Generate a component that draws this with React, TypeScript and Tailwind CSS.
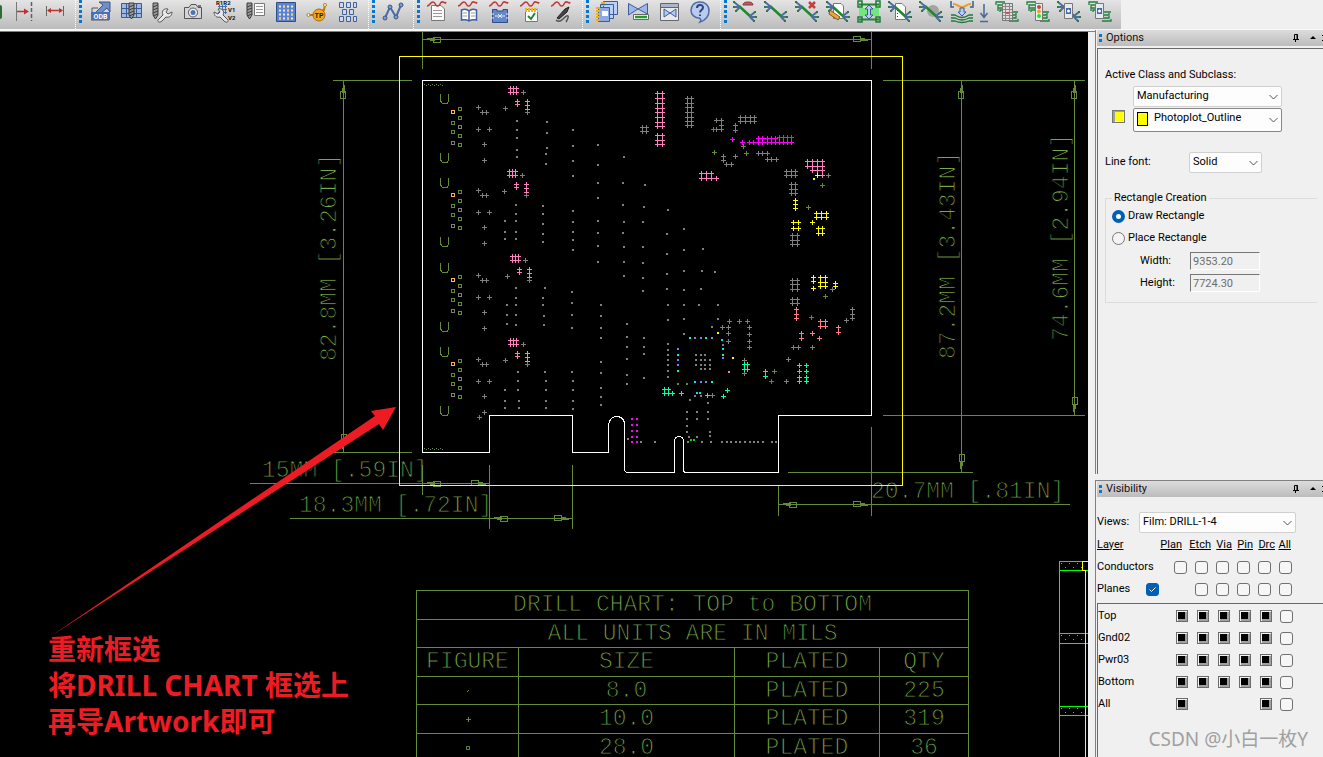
import type { ReactNode } from "react"
import clsx from "clsx"

const OLIVE = "#648c37"
const GRAY = "#808080"
const PINK = "#ff7fbf"
const TEAL = "#00ffaf"
const SALMON = "#ff7f7f"
const PURPLE = "#7f7fff"
const CYAN = "#00dfff"

type Pt = [number, number]

const grid = (xs: number[], ys: number[]): Pt[] => ys.flatMap((y) => xs.map((x): Pt => [x, y]))

const plusPath = (pts: Pt[]) => pts.map(([x, y]) => `M${x - 2} ${y + 0.5}h5M${x + 0.5} ${y - 2}v5`).join("")
const dotPath = (pts: Pt[]) => pts.map(([x, y]) => `M${x - 1} ${y - 1}h2v2h-2z`).join("")
const squarePath = (pts: Pt[]) => pts.map(([x, y]) => `M${x - 1.5} ${y - 1.5}h3v3h-3z`).join("")

/* ---------- drill data ---------- */

// the four connector clusters share one footprint
const clusters = [
  { x: 0, y: 0 },
  { x: -1, y: 83 },
  { x: 2, y: 168 },
  { x: 0, y: 252 },
]

const clusterPink: Pt[] = [...grid([510, 513, 516], [88, 92]), ...grid([517], [101, 104]), ...grid([527], [101, 105, 109])]
const clusterGray: Pt[] = [[523, 92], [505, 108], [527, 112]]
const clusterLeft: Pt[] = [[478, 107], [482, 112], [486, 112], [478, 129], [489, 129], [484, 144], [484, 160]]
const squaresGreen: Pt[] = [[460, 109], [460, 118], [453, 123], [453, 132], [460, 136], [460, 145]]
const squaresGray: Pt[] = [[460, 127], [453, 143]]

const slots = [94, 153, 178, 237, 263, 322, 347, 406]

const pluses: { color: string; pts: Pt[] }[] = [
  {
    color: PINK,
    pts: [
      ...grid([657, 662], [93, 98, 103, 108, 112, 117, 122, 126, 135, 140, 144]),
      ...grid([701, 706, 711], [173, 178]),
      [716, 178],
      ...grid([807, 812, 817, 822], [161, 166]),
      ...grid([812, 817, 822], [170]),
      [822, 175],
    ],
  },
  {
    color: GRAY,
    pts: [
      [479, 417],
      ...grid([642, 646], [127, 131]),
      ...grid([687, 691], [98, 103, 107, 112, 117, 121, 125]),
      [716, 120], [721, 120], [721, 125], [716, 129], [721, 129], [735, 125], [735, 130],
      ...grid([740, 745, 750, 754], [117, 121]),
      [723, 156], [723, 160], [726, 164], [731, 164], [735, 156],
      [758, 153], [762, 153], [767, 153], [767, 159], [771, 159], [776, 159],
      ...grid([786, 791, 795], [171, 175]),
      ...grid([791, 795], [184, 189, 193]),
      ...grid([792, 797], [235, 240, 244, 280, 284, 289, 299, 303]),
      [828, 175], [832, 289],
      [729, 321], [739, 321], [747, 321], [722, 327], [728, 327], [728, 333], [728, 341],
      [749, 327], [749, 334], [749, 341], [749, 347], [744, 360], [744, 373], [712, 395],
      [786, 381], [788, 359], [793, 347], [798, 347], [812, 347],
      [852, 309], [852, 314], [852, 318], [846, 320],
    ],
  },
  {
    color: "#ff00ff",
    pts: [
      [732, 139], [742, 142], [749, 142], [753, 142],
      ...grid([758, 762, 767, 771, 775], [138, 142]),
      ...grid([779, 783, 787, 791], [137, 142]),
    ],
  },
  {
    color: "#ffff00",
    pts: [
      [817, 175], [795, 200], [795, 204], [795, 208],
      ...grid([793, 798], [222, 228]),
      ...grid([816, 821, 826], [213, 217]),
      [812, 222],
      ...grid([818, 822], [228, 233]),
      ...grid([813], [277, 281, 288]),
      ...grid([820, 825], [277, 282, 286]),
      [835, 283], [835, 286],
    ],
  },
  {
    color: OLIVE,
    pts: [[713, 129], [714, 152], [743, 146], [746, 153], [822, 185], [808, 207], [825, 296], [811, 317], [774, 371], [771, 381]],
  },
  {
    color: SALMON,
    pts: [
      ...grid([796], [309, 314, 318]),
      ...grid([820, 825], [321, 326]),
      [801, 333], [801, 338], [812, 333], [819, 338], [838, 327], [838, 332],
    ],
  },
  {
    color: TEAL,
    pts: [
      ...grid([664, 668], [389, 393]),
      [672, 393], [681, 393], [707, 395], [727, 390], [723, 396],
      ...grid([744, 747], [364, 369]),
      [765, 371], [765, 376],
      ...grid([799, 806], [365, 371, 377, 381]),
    ],
  },
]

const dots: { color: string; pts: Pt[] }[] = [
  {
    color: GRAY,
    pts: [
      ...grid([517], [121, 130, 138, 150, 157]),
      [547, 122], [547, 133], [547, 148], [546, 154], [546, 164],
      ...grid([573], [130, 146, 161, 176, 211, 222, 232, 240, 250]),
      ...grid([598], [145, 165, 183, 198, 221, 233, 246, 262]),
      [624, 157], [623, 183], [623, 205], [624, 222], [623, 233], [624, 247], [624, 262], [624, 276],
      [645, 185], [644, 207], [643, 222], [643, 247], [643, 263], [643, 278], [643, 291],
      ...grid([516], [205, 214, 221, 232, 239, 288, 298, 305, 315, 325]),
      ...grid([505], [221, 232, 239, 390, 401, 408]),
      ...grid([543], [206, 214, 224, 234, 242]),
      ...grid([507], [305, 315, 324]),
      [545, 288], [543, 298], [543, 305], [544, 316], [544, 325],
      ...grid([572], [292, 303, 315, 328, 372]),
      ...grid([601], [305, 316, 328, 338, 362, 373, 388, 397, 405]),
      ...grid([627], [324, 337, 347, 359, 375, 384]),
      ...grid([644], [338, 347, 354, 378]),
      ...grid([518], [372, 381, 390]),
      [519, 401], [519, 408], [545, 372],
      ...grid([546], [381, 390, 401, 408]),
      ...grid([573], [381, 390, 401, 409]),
      [628, 439], [641, 442], [655, 442],
      [668, 210], [684, 229], [667, 234], [684, 250], [667, 254], [703, 249],
      [667, 274], [684, 271], [702, 271], [715, 272], [667, 289], [684, 290], [701, 289],
      [668, 305], [684, 305], [699, 305], [718, 305], [668, 320], [684, 319], [718, 319], [712, 327], [684, 334],
      ...grid([668], [344, 350, 355, 360, 365, 371, 377]),
      [723, 345],
      ...grid([696, 701, 705], [355, 360, 365]),
      ...grid([710], [360, 365, 369]),
      [701, 369], [705, 369],
      [695, 396], [701, 396], [690, 400], [708, 403],
      ...grid([687, 697, 708], [412, 419]),
      [687, 426], [687, 432], [710, 432], [710, 436], [689, 437], [697, 437], [688, 442], [702, 442], [711, 442],
      ...grid([722, 727, 731, 736, 740, 745, 750, 754, 758, 763, 772, 776], [442]),
    ],
  },
  { color: "#ff00ff", pts: grid([632, 637], [419, 425, 431, 437, 442]) },
  { color: TEAL, pts: [[690, 338], [706, 338], [723, 355], [678, 355], [678, 371], [712, 382]] },
  { color: PURPLE, pts: [[695, 338], [701, 338], [712, 338], [723, 358], [678, 349], [678, 360], [678, 365], [701, 382], [706, 382]] },
  { color: CYAN, pts: [[722, 340], [723, 349], [695, 382], [697, 393], [700, 393]] },
  { color: "#ffff00", pts: [[814, 179], [718, 333], [733, 358]] },
  { color: SALMON, pts: [[729, 372]] },
  { color: OLIVE, pts: [[678, 384], [687, 384]] },
  { color: "#00df00", pts: [[691, 440], [694, 440]] },
]

/* ---------- board drawing ---------- */

// arrow head with its tip at x,y, body trailing in direction `turn`
function Tip({ x, y, turn }: { x: number; y: number; turn: number }) {
  return (
    <path
      d="M4 -1H12M7 1H12M11 -2H18V3H11Z"
      transform={`translate(${x + 0.5} ${y + 0.5}) rotate(${turn})`}
      fill="none"
      stroke={OLIVE}
    />
  )
}

const dimensions = [
  { text: "15MM [.59IN]", at: "translate(262 477)" },
  { text: "18.3MM [.72IN]", at: "translate(299 512)" },
  { text: "20.7MM [.81IN]", at: "translate(871 498)" },
  { text: "82.8MM [3.26IN]", at: "translate(336 361) rotate(-90)" },
  { text: "87.2MM [3.43IN]", at: "translate(955 359) rotate(-90)" },
  { text: "74.6MM [2.94IN]", at: "translate(1068 341) rotate(-90)" },
]

function Board() {
  return (
    <svg className="block" width="1088" height="725" viewBox="0 32 1088 725" role="img" aria-label="Board drawing">
      <g fill="#79a944" stroke="#000" fontSize="23" className="font-['Liberation_Mono',monospace]">
        {dimensions.map((d) => (
          <text key={d.text} transform={d.at} xmlSpace="preserve">
            {d.text}
          </text>
        ))}
      </g>

      <g shapeRendering="crispEdges" fill="none">
        <path
          stroke={OLIVE}
          d="M422.5 32V69M871.5 32V69M422 39.5H872
             M333 80.5H412M333 452.5H412M343.5 80V452
             M883 80.5H1085M883 415.5H1085M788 472.5H973M961.5 80V472M1074.5 80V415
             M250 483.5H490M422.5 465V495M489.5 465V529M290 518.5H572M572.5 465V529
             M778 504.5H1070M778.5 485V516M871.5 427V516"
        />
        <Tip x={422} y={39} turn={0} />
        <Tip x={871} y={39} turn={180} />
        <Tip x={343} y={80} turn={90} />
        <Tip x={343} y={452} turn={-90} />
        <Tip x={961} y={80} turn={90} />
        <Tip x={961} y={472} turn={-90} />
        <Tip x={1074} y={80} turn={90} />
        <Tip x={1074} y={415} turn={-90} />
        <Tip x={422} y={483} turn={0} />
        <Tip x={489} y={483} turn={180} />
        <Tip x={489} y={518} turn={0} />
        <Tip x={572} y={518} turn={180} />
        <Tip x={778} y={504} turn={0} />
        <Tip x={871} y={504} turn={180} />

        {slots.map((y) => (
          <path key={y} stroke={OLIVE} d={`M440.5 ${y}v7l2 2.5h5l1 -2.5v-7`} />
        ))}
        <path stroke={OLIVE} strokeDasharray="1 3" d="M424 84.5h19M426 85.5h17M424 448.5h19M426 449.5h17" />
        {clusters.map((c) => (
          <g key={c.y}>
            <g transform={`translate(0 ${c.y})`}>
              <path stroke={OLIVE} d={squarePath(squaresGreen)} />
              <path stroke={GRAY} d={squarePath(squaresGray)} />
              <path stroke="#ffaf5f" d={squarePath([[453, 112]])} />
              <path stroke={GRAY} d={plusPath(clusterLeft)} />
            </g>
            <g transform={`translate(${c.x} ${c.y})`}>
              <path stroke={PINK} d={plusPath(clusterPink)} />
              <path stroke={GRAY} d={plusPath(clusterGray)} />
            </g>
          </g>
        ))}
        {pluses.map((p) => (
          <path key={p.color} stroke={p.color} d={plusPath(p.pts)} />
        ))}
        {dots.map((p) => (
          <path key={p.color} fill={p.color} d={dotPath(p.pts)} />
        ))}

        <path
          stroke="#ffffff"
          d="M422.5 80.5H871.5V415.5H778.5V472.5H684.5L683.5 470.5V441.5Q683.5 436.5 679 436.5T674.5 441.5V472.5H626.5L624.5 470.5V422.5Q622.5 416.5 616.5 416.5T608.5 424.5V452.5H572.5V415.5H489.5V452.5H422.5Z"
        />
        <path stroke="#00ff00" d="M1088 561.5H1059.5V757M1059 570.5H1088M1059 633.5H1088M1059 643.5H1088M1059 706.5H1088M1059 715.5H1088" />
        <path
          fill="#00ff00"
          d={[563, 635, 708].map((y) => [1061, 1069, 1077].map((x) => `M${x} ${y}h1v1h-1zM${x + 4} ${y + 4}h1v1h-1z`).join("")).join("")}
        />
        <path stroke="#ffff00" d="M399.5 56.5H902.5V485.5H399.5ZM1088 561.5H1082.5V570.5H1085.5V757" />
      </g>

      <path fill="#ed1c24" d="M48 638L375 416L371 411L396 407L383 430L379 424Z" />
    </svg>
  )
}

const drills = [
  { figure: "dot", size: "8.0", qty: "225" },
  { figure: "plus", size: "10.0", qty: "319" },
  { figure: "square", size: "28.0", qty: "36" },
]

function DrillChart() {
  const cell = "border border-[#648c37] p-0 font-normal"
  return (
    <table className="absolute left-[416px] top-[558px] w-[552px] table-fixed border-collapse text-center font-['Liberation_Mono',monospace] text-[23px] leading-[26px] text-[#79a944] [-webkit-text-stroke:1px_black]">
      <colgroup>
        <col className="w-[102px]" />
        <col className="w-[216px]" />
        <col className="w-[145px]" />
        <col className="w-[89px]" />
      </colgroup>
      <thead>
        <tr className="h-[29px]">
          <th colSpan={4} className={cell}>DRILL CHART: TOP to BOTTOM</th>
        </tr>
        <tr className="h-[28px]">
          <th colSpan={4} className={cell}>ALL UNITS ARE IN MILS</th>
        </tr>
        <tr className="h-[29px]">
          <th className={cell}>FIGURE</th>
          <th className={cell}>SIZE</th>
          <th className={cell}>PLATED</th>
          <th className={cell}>QTY</th>
        </tr>
      </thead>
      <tbody>
        {drills.map((d) => (
          <tr key={d.size} className="h-[28px] even:h-[29px]">
            <td className={cell}>
              <svg className="mx-auto block" width="8" height="8" viewBox="0 0 8 8" fill="none" stroke={OLIVE} role="img" aria-label={d.figure}>
                {d.figure === "dot" && <path d="M3 5L5 3" />}
                {d.figure === "plus" && <path d="M2 4.5h5M4.5 2v5" />}
                {d.figure === "square" && <path d="M2.5 2.5h3v3h-3z" />}
              </svg>
            </td>
            <td className={cell}>{d.size}</td>
            <td className={cell}>PLATED</td>
            <td className={cell}>{d.qty}</td>
          </tr>
        ))}
      </tbody>
    </table>
  )
}

/* ---------- toolbar ---------- */

const Squiggle = () => <path d="M1 6C4 6 4 2 7 2S9 7 12 6S14 1 17 2S19 4 20 2" stroke="#c23838" strokeWidth="1.5" fill="none" />

const Ratsnest = ({ children }: { children?: ReactNode }) => (
  <>
    <path d="M6 6L18 17" stroke="#20882c" strokeWidth="2.500" />
    <path d="M1 2L7 7M1 7H6M3 11L7 7M17 16L22 12M18 17H23M17 17L21 21" stroke="#4d6d9d" strokeWidth="2" />
    <path d="M0 1h2v2h-2zM0 6h2v2h-2zM2 10h2v2h-2zM21 11h2v2h-2zM22 16h2v2h-2zM20 20h2v2h-2z" fill="#2d7a42" />
    {children}
  </>
)

const Fan = ({ side }: { side: "left" | "right" }) => (
  <path
    d={side === "left" ? "M10 2H1V5M10 5H3V8M10 8H3V11M10 10H5V12" : "M14 12H23M14 15H21V13M14 18H21V16M14 21H23V19"}
    stroke="#20803c"
    strokeWidth="1.3"
    fill="none"
  />
)

const Drill = ({ x }: { x: number }) => (
  <g stroke="#3b3b3b">
    <path d={`M${x} 3h5v12l-2.500 4l-2.500 -4z`} fill="#9b9b9b" />
    <path d={`M${x} 7l5 -2M${x} 10l5 -2M${x} 13l5 -2M${x} 16l5 -2`} />
  </g>
)

const Wrench = () => (
  <path
    d="M8 20L13 15C11 11 14 8 18 9L16 12L18 14L22 12C22 16 19 18 16 17L12 21C10 23 7 22 8 20Z"
    fill="#e8e8e8"
    stroke="#555"
  />
)

const Glasses = ({ x, y }: { x: number; y: number }) => (
  <path d={`M${x} ${y}l6 4l6 -4v8l-6 -4l-6 4z`} fill="#b5c8ef" stroke="#3d5c9c" />
)

const toolIcons: Record<string, ReactNode> = {
  "Dimension to edge": (
    <>
      <path d="M4.500 2V21" stroke="#777" />
      <path d="M19.500 2V21" stroke="#51617c" strokeWidth="1.500" strokeDasharray="4 2" />
      <path d="M5 11.500H14" stroke="#c03030" strokeWidth="1.500" />
      <path d="M12 8.500L17 11.500L12 14.500Z" fill="#c03030" />
    </>
  ),
  "Linear dimension": (
    <>
      <path d="M3.500 6V16M20.500 6V16" stroke="#666" />
      <path d="M5 10.500H19" stroke="#c03030" strokeWidth="1.500" />
      <path d="M4 10.500l4 -2.500v5zM20 10.500l-4 -2.500v5z" fill="#c03030" />
    </>
  ),
  "ODB++ export": (
    <>
      <path d="M8 12L15 5L11 2H22V12L19 8L12 14Z" fill="#6f8fc5" stroke="#3c5788" />
      <path d="M4 12V8h6M3 20H21" stroke="#556" fill="none" />
      <rect x="3" y="12" width="19" height="8" fill="#4a6fb5" />
      <text x="12.500" y="19" textAnchor="middle" fontSize="7" fontWeight="700" fill="#fff">ODB</text>
    </>
  ),
  "Drill legend": (
    <>
      <path d="M2.500 3.500H22.500V17.500H2.500ZM2 8.500H22M2 13.500H22M7.500 3V17M17.500 3V17" fill="#9db8e5" stroke="#3b5b94" />
      <Drill x={10} />
    </>
  ),
  "Drill customization": (
    <>
      <Drill x={3} />
      <Wrench />
    </>
  ),
  Snapshot: (
    <>
      <path d="M3.500 7.500H8L10 4.500H15L17 7.500H20.500V18.500H3.500Z" fill="#d5d5d5" stroke="#555" />
      <circle cx="12" cy="12.500" r="4.500" fill="#f3f3f3" stroke="#555" />
      <circle cx="12" cy="12.500" r="2.500" fill="#4b76bd" />
      <path d="M17 5h3v2h-3z" fill="#777" />
    </>
  ),
  "Auto rename": (
    <>
      <path d="M6 6.500H15M6 9.500H15M6 12.500H15M7.500 5V14M10.500 5V14M13.500 5V14" stroke="#4b6fae" />
      <g transform="matrix(-1 0 0 1 24 0)"><Wrench /></g>
      <g fontSize="6" fontWeight="700" fill="#111">
        <text x="4" y="5">R1R2</text>
        <text x="16" y="12">V1</text>
        <text x="16" y="20">V2</text>
      </g>
    </>
  ),
  "Drill list": (
    <>
      <Drill x={4} />
      <path d="M11.500 3.500H21.500V15.500H11.500Z" fill="#fff" stroke="#777" />
      <path d="M13 6.500h7M13 9.500h7M13 12.500h7" stroke="#999" />
    </>
  ),
  "Pin grid": (
    <>
      <path d="M2.500 2.500H21.500V21.500H2.500Z" fill="#5c83cb" stroke="#2f4e88" />
      <path d="M5 6.500H20M5 10.500H20M5 14.500H20M5 18.500H20" stroke="#e4ecfb" strokeWidth="2" strokeDasharray="2 2" />
      <path d="M9 6.500h2M13 10.500h2M5 18.500h2M17 14.500h2M13 18.500h2" stroke="#f2c75a" strokeWidth="2" />
    </>
  ),
  Testprep: (
    <>
      <path d="M3 15H10M13 12L19 10L20 5" stroke="#b97a12" strokeWidth="2" />
      <circle cx="3.500" cy="15" r="1.500" fill="#fff" stroke="#b97a12" />
      <circle cx="20" cy="5" r="1.500" fill="#fff" stroke="#b97a12" />
      <circle cx="14" cy="15" r="6" fill="#f4a81c" stroke="#a96a08" />
      <text x="14" y="17.500" textAnchor="middle" fontSize="7" fontWeight="700" fill="#222">TP</text>
    </>
  ),
  "Module array": (
    <path
      d="M3.500 2.500h4v5h-4zM10.500 2.500h4v5h-4zM17.500 2.500h3v5h-3zM6.500 9.500h4v5h-4zM13.500 9.500h4v5h-4zM3.500 16.500h4v5h-4zM10.500 16.500h4v5h-4zM17.500 16.500h3v5h-3z"
      fill="#c9d9f7"
      stroke="#44618f"
    />
  ),
  "Net topology": (
    <>
      <path d="M4 18L9 7L15 17L20 5" stroke="#4c6ca6" strokeWidth="2" fill="none" />
      <g fill="#7c9bd4" stroke="#3d5788">
        <circle cx="4" cy="18" r="2" />
        <circle cx="9" cy="7" r="2" />
        <circle cx="15" cy="17" r="2" />
        <circle cx="20" cy="5" r="2" />
      </g>
    </>
  ),
  "Signal report": (
    <>
      <path d="M5.500 5.500H15L18.500 9V20.500H5.500Z" fill="#fafafa" stroke="#777" />
      <path d="M7 10.500h9M7 13.500h9M7 16.500h9" stroke="#999" />
      <Squiggle />
    </>
  ),
  "Signal library": (
    <>
      <path d="M4.500 10Q9 8 12 11Q15 8 19.500 10V20Q15 19 12 21Q9 19 4.500 20ZM12 11V21" fill="#fff" stroke="#3c5f9e" strokeWidth="1.500" />
      <path d="M6 13h4M6 16h4M14 13h4M14 16h4" stroke="#999" />
      <Squiggle />
    </>
  ),
  "Signal model": (
    <>
      <path d="M4.500 9.500H9V11H15V9.500H19.500V22.500H4.500Z" fill="#6488c9" stroke="#2f4c84" />
      <path d="M3 14h3M3 18h3M18 14h3M18 18h3M7 16h4M13 16h4M10 14l2 2l-2 2M14 14l-2 2l2 2" stroke="#dfe8fb" />
      <Squiggle />
    </>
  ),
  "Signal audit": (
    <>
      <path d="M6.500 9.500H18.500V21.500H6.500Z" fill="#fff" stroke="#777" />
      <path d="M6 10h13" stroke="#eeb422" strokeWidth="4" strokeDasharray="2 1" />
      <path d="M9 16L12 19L16 13" stroke="#1e8b2b" strokeWidth="2" fill="none" />
      <Squiggle />
    </>
  ),
  "Signal probe": (
    <>
      <path d="M7 18L15 9L19 7L17 12L9 19Z" fill="#444" stroke="#222" />
      <path d="M6 20Q9 23 13 19T18 16T16 22" stroke="#555" fill="none" strokeWidth="1.500" />
      <Squiggle />
    </>
  ),
  "Artwork films": (
    <>
      <path d="M8.500 1.500H22.500V14.500H8.500ZM5.500 4.500H18.500V18.500H5.500Z" fill="#bcd0f5" stroke="#3d5c9c" />
      <path d="M3.500 7.500H14.500V21.500H3.500Z" fill="#8dabe2" stroke="#3d5c9c" />
      <path d="M7 11h6v5h-6z" fill="#fff" />
      <path d="M3 7v15M8 2v4" stroke="#eab020" strokeWidth="4" strokeDasharray="2 1" />
    </>
  ),
  "Hide window": (
    <>
      <path d="M2.500 3.500L12 9L21.500 3.500V14L12 9L2.500 15Z" fill="#9db8e8" stroke="#3d5c9c" />
      <path d="M7.500 14.500H22.500V19.500H7.500Z" fill="#fff" stroke="#666" />
      <path d="M9 17h12" stroke="#1c9e2c" strokeWidth="2.500" />
    </>
  ),
  "Show window": (
    <>
      <path d="M3.500 3.500H21.500V20.500H3.500ZM3 7.500H22" fill="#e9e9e9" stroke="#666" />
      <path d="M4 4h17v3h-17z" fill="#a9b6cc" />
      <Glasses x={7} y={9} />
    </>
  ),
  Help: (
    <>
      <path d="M12 2C6 2 3 6 3 10.500S7 18 11 18Q14 19 12 22Q21 19 21 10.500C21 5 17 2 12 2Z" fill="#b9cbee" stroke="#4f6da4" strokeWidth="1.500" />
      <path d="M9 8C9 4 15 4 15 7.500C15 10 12 10 12 12.500M12 14.500V16" stroke="#2d4878" strokeWidth="2" fill="none" />
    </>
  ),
  "Assign differential pair": (
    <Ratsnest>
      <path d="M10 5Q10 2 15 2T20 5Z" fill="#c45b5b" stroke="#8d3434" />
    </Ratsnest>
  ),
  "Edit net": <Ratsnest />,
  "Delete net": (
    <Ratsnest>
      <path d="M14 2L20 8M20 2L14 8" stroke="#c04040" strokeWidth="2.500" />
    </Ratsnest>
  ),
  "Edit properties": (
    <>
      <path d="M7.500 3.500H15L17.500 6V18.500H7.500Z" fill="#fff" stroke="#777" />
      <Ratsnest />
      <path d="M4 10L14 17L12 20L3 14Z" fill="#eba43c" stroke="#85551a" />
    </>
  ),
  "Swap components": (
    <>
      <path d="M2 8h20v8h-20z" fill="#71e879" />
      <path d="M2 4.500H22M2 19.500H22" stroke="#20882c" strokeWidth="2" />
      <path d="M1 1h4v6h-4zM19 1h4v6h-4zM1 17h4v5h-4zM19 17h4v5h-4z" fill="none" stroke="#1e7a3a" strokeWidth="1.500" />
      <path d="M12 5L16 9H13.500V15H16L12 19L8 15H10.500V9H8Z" fill="#b7ccf4" stroke="#3d5c9c" />
    </>
  ),
  "Net report": (
    <>
      <path d="M7.500 3.500H14L17.500 7V19.500H7.500Z" fill="#fff" stroke="#777" />
      <Ratsnest />
      <path d="M9.500 10v7" stroke="#444" strokeDasharray="1 2" />
    </>
  ),
  "Highlight net": (
    <>
      <circle cx="14" cy="11" r="6" fill="#a3a3a3" />
      <Ratsnest />
    </>
  ),
  "Spread bundle": (
    <>
      <path d="M3 4C8 4 8 7 12 7S16 4 21 4" stroke="#e8a020" strokeWidth="2" fill="none" />
      <path d="M1 1V7H4M23 1V7H20" stroke="#345e94" strokeWidth="1.500" fill="none" />
      <path d="M10 8H14V12H16L12 16L8 12H10Z" fill="#b7ccf4" stroke="#3d5c9c" />
      <path d="M1 15H5Q12 20 19 15H23M1 18H5Q12 22 19 18H23M1 21H5Q12 24 19 21H23" stroke="#1e7a3a" strokeWidth="1.300" fill="none" />
    </>
  ),
  Commit: <path d="M12 4V17M8.500 13L12 17.500L15.500 13M8 21.500H16" stroke="#46689c" strokeWidth="1.500" fill="none" />,
  "Pin delay": (
    <>
      <Fan side="left" />
      <Fan side="right" />
      <path d="M7.500 3.500H17.500V20.500H7.500Z" fill="#ddd" stroke="#777" />
      <path d="M8 6.500h9M8 9.500h9M8 12.500h9M8 15.500h9M8 18.500h9M10.500 4v16M14.500 4v16" stroke="#888" />
      <path d="M11 13h3" stroke="#c33" strokeWidth="1.500" />
    </>
  ),
  "Signal status": (
    <>
      <Fan side="left" />
      <Fan side="right" />
      <path d="M9.500 3.500H16.500V20.500H9.500Z" fill="#eee" stroke="#777" />
      <circle cx="13" cy="7" r="2" fill="#c44" />
      <circle cx="13" cy="11.500" r="2" fill="#eba52c" />
      <circle cx="13" cy="16" r="2" fill="#12e827" />
    </>
  ),
  "Probe net": (
    <>
      <Ratsnest />
      <path d="M7.500 3.500H15.500V18.500H7.500Z" fill="#e4e9f2" stroke="#777" />
      <path d="M9 8h5v6h-5z" fill="#4468a8" />
      <circle cx="11.500" cy="11" r="1.500" fill="#fff" />
    </>
  ),
  "Probe bus": (
    <>
      <Fan side="left" />
      <Fan side="right" />
      <path d="M7.500 3.500H15.500V18.500H7.500Z" fill="#e4e9f2" stroke="#777" />
      <path d="M9 8h5v6h-5z" fill="#4468a8" />
      <circle cx="11.500" cy="11" r="1.500" fill="#fff" />
    </>
  ),
}

const toolGroups = [
  ["Dimension to edge", "Linear dimension"],
  ["ODB++ export", "Drill legend", "Drill customization", "Snapshot", "Auto rename", "Drill list", "Pin grid", "Testprep", "Module array"],
  ["Net topology"],
  ["Signal report", "Signal library", "Signal model", "Signal audit", "Signal probe"],
  ["Artwork films", "Hide window", "Show window", "Help"],
  [
    "Assign differential pair", "Edit net", "Delete net", "Edit properties", "Swap components", "Net report", "Highlight net",
    "Spread bundle", "Commit", "Pin delay", "Signal status", "Probe net", "Probe bus",
  ],
]

function Toolbar() {
  return (
    <header className="flex h-[32px] shrink-0 flex-col bg-[#f0f0f0]">
      <div className="flex h-[29px] w-fit bg-linear-to-b from-[#e4e4e4] to-[#bcbcbc] pr-[6px]">
        <div className="mt-[5px] h-[14px] w-[2px] rounded-r-sm border border-[#2a6e32] bg-[#7adf7f]" />
        {toolGroups.map((group, i) => (
          <div key={group[0]} className={clsx("flex", i === 0 ? "pl-[6px]" : "pl-[5px]")}>
            {i > 0 && (
              <div className="flex w-[9px] gap-[3px]">
                <span className="h-full border-l border-dotted border-white" />
                <svg width="3" height="24" viewBox="0 0 3 24">
                  <path d="M1.500 0V24" stroke="#0078d7" strokeWidth="3" strokeDasharray="3 2" />
                </svg>
              </div>
            )}
            {group.map((name) => (
              <button
                key={name}
                type="button"
                aria-label={name}
                className={clsx("flex justify-center overflow-hidden", name === "Commit" ? "w-[14px]" : "w-[31px]")}
              >
                <svg className="shrink-0" width="24" height="24" viewBox="0 0 24 24" fill="none">
                  {toolIcons[name]}
                </svg>
              </button>
            ))}
          </div>
        ))}
      </div>
      <div className="h-[2px] bg-[#f8f8f8]" />
      <div className="mr-[228px] h-px bg-[#808080]" />
    </header>
  )
}

/* ---------- side panels ---------- */

function PanelTitle({ children }: { children: ReactNode }) {
  return (
    <div className="flex h-[16px] items-center bg-linear-to-b from-[#dcdcdc] to-[#bcbcbc] pl-[2px]">
      <svg width="3" height="8" viewBox="0 0 3 8" fill="#0078d7">
        <path d="M0 0h3v3H0zM0 5h3v3H0z" />
      </svg>
      <h2 className="ml-[4px] flex-1 text-[11px] leading-[14px] text-[#111]">{children}</h2>
      <button type="button" aria-label="Pin" className="mr-[10px]">
        <svg width="8" height="8" viewBox="0 0 8 8" fill="none" stroke="#000">
          <path d="M2.500 5V.5h3V5M5 .5V5M1 5.500h6M3.500 5v3" />
        </svg>
      </button>
      <button type="button" aria-label="Collapse" className="mr-[6px]">
        <svg width="6" height="4" viewBox="0 0 6 4">
          <path d="M3 0L6 3H0z" />
        </svg>
      </button>
      <button type="button" aria-label="Close" className="w-px overflow-hidden">
        <svg width="6" height="6" viewBox="0 0 6 6" stroke="#000">
          <path d="M0 0L6 6M6 0L0 6" />
        </svg>
      </button>
    </div>
  )
}

function Dropdown({ id, label, value, className, children }: { id: string; label?: string; value: string; className: string; children?: ReactNode }) {
  return (
    <div className="relative w-fit">
      <select
        id={id}
        aria-label={label}
        className={clsx("block appearance-none rounded-xs border bg-[#fdfdfd] pr-4 text-black", className)}
      >
        <option>{value}</option>
      </select>
      {children}
      <svg className="pointer-events-none absolute right-[4px] top-1/2 -translate-y-1/2" width="9" height="5" viewBox="0 0 9 5" fill="none" stroke="#555">
        <path d="M.5 .5L4.500 4.500L8.500 .5" />
      </svg>
    </div>
  )
}

function OptionsPanel() {
  return (
    <section className="flex min-h-0 flex-1 flex-col overflow-hidden border-l border-[#808080] pl-px">
      <PanelTitle>Options</PanelTitle>
      <form className="mt-[2px] flex-1 border-l border-t border-[#696969] pl-[7px] pt-[19px]">
        <label htmlFor="active-class" className="block leading-[14px]">Active Class and Subclass:</label>
        <div className="mt-[4px] pl-[28px]">
          <Dropdown id="active-class" value="Manufacturing" className="h-[21px] w-[149px] border-[#d0d0d0] pl-[3px]" />
        </div>
        <div className="mt-px flex items-start gap-[8px] pl-[7px]">
          <button type="button" aria-label="Subclass color" className="mt-[2px] size-[13px] border border-[#777] bg-[#ffff00] shadow-[inset_2px_1px_0_#a0a0a0,inset_-1px_-1px_0_#fff]" />
          <Dropdown id="subclass" label="Subclass" value="Photoplot_Outline" className="h-[24px] w-[149px] border-[#888] pb-[3px] pl-[20px]">
            <span className="pointer-events-none absolute left-[4px] top-[4px] h-[14px] w-[11px] border border-black bg-[#ffff00]" />
          </Dropdown>
        </div>
        <div className="mt-[20px] flex items-center">
          <label htmlFor="line-font" className="w-[84px]">Line font:</label>
          <Dropdown id="line-font" value="Solid" className="h-[21px] w-[73px] border-[#d0d0d0] pl-[3px]" />
        </div>
        <fieldset className="mr-[6px] mt-[18px] h-[112px] border border-r-0 border-[#dcdcdc] pl-[6px]">
          <legend className="px-[2px] leading-[14px]">Rectangle Creation</legend>
          <label className="mt-[4px] flex h-[14px] items-center gap-[3px]">
            <input type="radio" name="rect" defaultChecked className="size-[13px] appearance-none rounded-full border border-[#777] bg-white checked:border-4 checked:border-[#005fb8]" />
            Draw Rectangle
          </label>
          <label className="mt-[8px] flex h-[14px] items-center gap-[3px]">
            <input type="radio" name="rect" className="size-[13px] appearance-none rounded-full border border-[#777] bg-[#f4f4f4] checked:border-4 checked:border-[#005fb8]" />
            Place Rectangle
          </label>
          <div className="mt-[7px] flex h-[18px] items-center pl-[28px]">
            <label htmlFor="rect-width" className="w-[50px]">Width:</label>
            <input id="rect-width" disabled defaultValue="9353.20" className="h-[18px] w-[70px] border border-b-white border-l-[#777] border-r-white border-t-[#777] bg-[#f0f0f0] pl-[2px] text-[#6d6d6d]" />
          </div>
          <div className="mt-[4px] flex h-[18px] items-center pl-[28px]">
            <label htmlFor="rect-height" className="w-[50px]">Height:</label>
            <input id="rect-height" disabled defaultValue="7724.30" className="h-[18px] w-[70px] border border-b-white border-l-[#777] border-r-white border-t-[#777] bg-[#f0f0f0] pl-[2px] text-[#6d6d6d]" />
          </div>
        </fieldset>
      </form>
    </section>
  )
}

function Check({ label, checked }: { label: string; checked?: boolean }) {
  return (
    <span className="relative mx-auto block size-[13px]">
      <input
        type="checkbox"
        aria-label={label}
        defaultChecked={checked}
        className="block size-[13px] appearance-none rounded-[3px] border border-[#707070] bg-[#f6f6f6] checked:border-[#005fb8] checked:bg-[#005fb8]"
      />
      {checked && (
        <svg className="pointer-events-none absolute inset-0" width="13" height="13" viewBox="0 0 13 13" fill="none" stroke="#fff">
          <path d="M3.500 6.500L5.500 8.500L9.500 4.500" />
        </svg>
      )}
    </span>
  )
}

const Swatch = ({ label }: { label: string }) => (
  <button
    type="button"
    aria-label={label}
    className="mx-auto block size-[12px] border border-[#6b6b6b] bg-black shadow-[inset_1px_1px_0_#f4f4f4,inset_-2px_-2px_0_#a0a0a0]"
  />
)

const columns = [
  { name: "Plan", pad: "pr-[9px]" },
  { name: "Etch", pad: "pr-px" },
  { name: "Via", pad: "pr-px" },
  { name: "Pin", pad: "pr-px" },
  { name: "Drc", pad: "" },
  { name: "All", pad: "pr-[5px]" },
]

const layers = ["Top", "Gnd02", "Pwr03", "Bottom", "All"]

function Cols() {
  return (
    <colgroup>
      <col className="w-[45px]" />
      <col className="w-[28px]" />
      {columns.map((c) => (
        <col key={c.name} className="w-[21px]" />
      ))}
    </colgroup>
  )
}

function VisibilityPanel() {
  return (
    <section className="flex h-[277px] shrink-0 flex-col overflow-hidden border-l border-t border-[#808080] pl-px">
      <PanelTitle>Visibility</PanelTitle>
      <div className="mt-[15px] flex items-center">
        <label htmlFor="views" className="w-[42px]">Views:</label>
        <Dropdown id="views" value="Film: DRILL-1-4" className="h-[21px] w-[157px] border-[#d0d0d0] pl-[3px]" />
      </div>
      <table className="mt-px w-[199px] table-fixed">
        <Cols />
        <thead>
          <tr className="h-[22px]">
            <th className="p-0 text-left font-normal underline">Layer</th>
            <th className="p-0" />
            {columns.map((c) => (
              <th key={c.name} className="p-0 font-normal">
                <span className={clsx("flex justify-end underline", c.pad)}>{c.name}</span>
              </th>
            ))}
          </tr>
        </thead>
        <tbody>
          {["Conductors", "Planes"].map((row) => (
            <tr key={row} className="h-[22px]">
              <th className="whitespace-nowrap p-0 text-left font-normal">{row}</th>
              <td className="p-0 pr-[8px]">{row === "Planes" && <Check label="Planes Plan" checked />}</td>
              {columns.map((c) => (
                <td key={c.name} className="p-0">
                  {!(row === "Planes" && c.name === "Plan") && <Check label={`${row} ${c.name}`} />}
                </td>
              ))}
            </tr>
          ))}
        </tbody>
      </table>
      <div className="mt-[3px] flex-1 border-l border-t border-[#696969] pt-px">
        <table className="w-[199px] table-fixed">
          <Cols />
          <tbody>
            {layers.map((row) => (
              <tr key={row} className="h-[22px]">
                <th className="p-0 text-left font-normal">{row}</th>
                <td className="p-0" />
                {columns.map((c) => (
                  <td key={c.name} className="p-0">
                    {c.name === "All" ? (
                      <Check label={`${row} ${c.name}`} />
                    ) : (
                      (row !== "All" || c.name === "Plan" || c.name === "Drc") && <Swatch label={`${row} ${c.name}`} />
                    )}
                  </td>
                ))}
              </tr>
            ))}
          </tbody>
        </table>
      </div>
    </section>
  )
}

export default function App() {
  return (
    <div className="relative flex h-screen flex-col overflow-hidden bg-[#f0f0f0] font-['Roboto','Liberation_Sans',sans-serif] text-[11px] text-black">
      <Toolbar />
      <div className="flex min-h-0 flex-1">
        <main className="relative min-w-0 flex-1 overflow-hidden bg-black">
          <Board />
          <DrillChart />
          <p className="absolute left-[48px] top-[599px] font-['Noto_Sans','Noto_Sans_CJK_SC',sans-serif] text-[28px] font-bold leading-[36px] text-[#ed1c24]">
            重新框选
            <br />
            将DRILL CHART 框选上
            <br />
            再导Artwork即可
          </p>
        </main>
        <aside className="flex w-[235px] shrink-0 flex-col gap-[6px] pl-[7px] -mt-[2px]">
          <OptionsPanel />
          <VisibilityPanel />
        </aside>
      </div>
      <p className="pointer-events-none absolute bottom-[5px] right-[15px] font-['Noto_Sans','Noto_Sans_CJK_SC',sans-serif] text-[19px] leading-[26px] text-[#a0a0a0]">
        CSDN @小白一枚Y
      </p>
    </div>
  )
}
